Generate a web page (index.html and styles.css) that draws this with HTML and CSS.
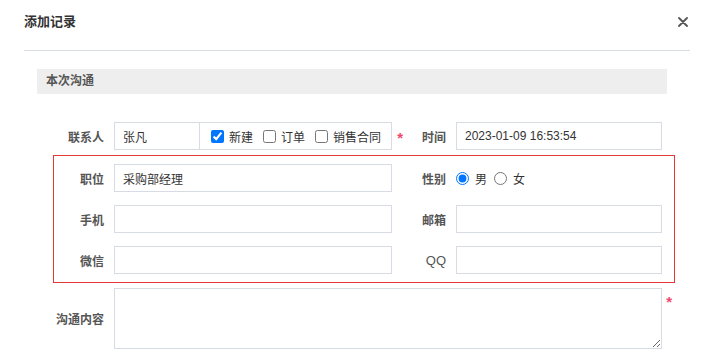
FILE: index.html
```html
<!DOCTYPE html>
<html lang="zh-CN">
<head>
    <meta charset="UTF-8">
    <title>添加记录</title>
    <link rel="stylesheet" href="styles.css">
</head>
<body>
<div class="fenetre">
    <div class="entete">
        <span class="titre">添加记录</span>
        <button class="fermer" type="button" aria-label="关闭">
            <svg width="10" height="10" viewBox="0 0 10 10">
                <path d="M1 1 L9 9 M9 1 L1 9" stroke="#555" stroke-width="1.8" stroke-linecap="round"/>
            </svg>
        </button>
    </div>

    <div class="corps">
        <div class="barre-section">本次沟通</div>

        <!-- Contact -->
        <div class="rangee rangee-contact">
            <label class="etiquette" for="contact">联系人</label>
            <div class="champ champ-requis">
                <input type="text" id="contact" class="saisie saisie-nom" value="张凡">
                <div class="groupe-cases">
                    <label class="option"><input type="checkbox" checked> 新建</label>
                    <label class="option"><input type="checkbox"> 订单</label>
                    <label class="option"><input type="checkbox"> 销售合同</label>
                </div>
                <span class="requis">*</span>
            </div>
            <label class="etiquette" for="heure">时间</label>
            <div class="champ">
                <input type="text" id="heure" class="saisie" value="2023-01-09 16:53:54">
            </div>
        </div>

        <!-- Infos contact -->
        <div class="cadre-infos">
            <div class="rangee">
                <label class="etiquette" for="poste">职位</label>
                <div class="champ"><input type="text" id="poste" class="saisie" value="采购部经理"></div>
                <span class="etiquette">性别</span>
                <div class="champ groupe-radios">
                    <label class="option"><input type="radio" name="sexe" checked> 男</label>
                    <label class="option"><input type="radio" name="sexe"> 女</label>
                </div>
            </div>
            <div class="rangee">
                <label class="etiquette" for="mobile">手机</label>
                <div class="champ"><input type="text" id="mobile" class="saisie"></div>
                <label class="etiquette" for="mail">邮箱</label>
                <div class="champ"><input type="text" id="mail" class="saisie"></div>
            </div>
            <div class="rangee">
                <label class="etiquette" for="wechat">微信</label>
                <div class="champ"><input type="text" id="wechat" class="saisie"></div>
                <label class="etiquette etiquette-latine" for="qq">QQ</label>
                <div class="champ"><input type="text" id="qq" class="saisie"></div>
            </div>
        </div>

        <!-- Contenu -->
        <div class="rangee rangee-texte">
            <label class="etiquette" for="contenu">沟通内容</label>
            <div class="champ champ-large champ-requis">
                <textarea id="contenu" class="zone-texte"></textarea>
                <span class="requis requis-texte">*</span>
            </div>
        </div>
    </div>
</div>
</body>
</html>
```

FILE: styles.css
```css
body {
    margin: 0;
    background: #ffffff;
    font-family: "Liberation Sans", "Noto Sans CJK SC", sans-serif;
    font-size: 12px;
    color: #333;
}

.fenetre {
    width: 704px;
    height: 358px;
    overflow: hidden;
}

.entete {
    display: flex;
    justify-content: space-between;
    align-items: center;
    height: 50px;
    margin: 0 14px 0 24px;
    border-bottom: 1px solid #d9dee6;
}
.titre {
    font-size: 13px;
    font-weight: bold;
    color: #333;
    line-height: 16px;
    margin-top: -6px;
}
.fermer {
    border: none;
    background: none;
    padding: 0;
    margin: -6px 2px 0 0;
    width: 10px;
    height: 10px;
    cursor: pointer;
    display: flex;
}

.corps {
    padding: 18px 37px 0 37px;
}

.barre-section {
    background: #eeeeee;
    height: 25px;
    line-height: 25px;
    padding-left: 9px;
    font-weight: bold;
    color: #555;
}

.rangee {
    display: grid;
    grid-template-columns: 67px 278px 44px 206px;
    column-gap: 10px;
    align-items: center;
    height: 28px;
}
.rangee-contact {
    margin-top: 28px;
}

.etiquette {
    text-align: right;
    font-weight: bold;
    color: #555;
    white-space: nowrap;
}
.etiquette-latine {
    font-weight: normal;
    font-size: 13px;
}

.champ {
    position: relative;
    display: flex;
    align-items: center;
    height: 28px;
}
.champ-large {
    grid-column: 2 / 5;
    height: 61px;
}

.saisie {
    width: 100%;
    height: 28px;
    box-sizing: border-box;
    border: 1px solid #d7dbe3;
    padding: 0 8px;
    font-family: inherit;
    font-size: 12px;
    color: #333;
    outline: none;
}
.saisie-nom {
    width: 86px;
    flex: none;
}

.groupe-cases {
    flex: 1;
    display: flex;
    align-items: center;
    gap: 10px;
    height: 28px;
    box-sizing: border-box;
    margin-left: -1px;
    border: 1px solid #d7dbe3;
    padding-left: 11px;
}
.option {
    display: flex;
    align-items: center;
    color: #333;
    white-space: nowrap;
}
.option input {
    margin: 0 5px 0 0;
    width: 13px;
    height: 13px;
}
.groupe-radios {
    gap: 7px;
}
.groupe-radios .option input {
    margin-right: 6px;
}

.requis {
    position: absolute;
    right: -11px;
    top: 8px;
    color: #f0466e;
    font-size: 15px;
    line-height: 15px;
    font-weight: bold;
}
.requis-texte {
    right: -10px;
    top: 6px;
}

.cadre-infos {
    display: grid;
    row-gap: 13px;
    margin: 5px -8px 0 16px;
    border: 1px solid #e53935;
    padding: 8px 12px 8px 0;
}
.cadre-infos .rangee {
    grid-template-columns: 50px 278px 44px 206px;
}

.rangee-texte {
    height: 61px;
    margin-top: 5px;
}
.zone-texte {
    width: 100%;
    height: 61px;
    box-sizing: border-box;
    border: 1px solid #d7dbe3;
    padding: 6px 8px;
    font-family: inherit;
    font-size: 12px;
    outline: none;
}
```
